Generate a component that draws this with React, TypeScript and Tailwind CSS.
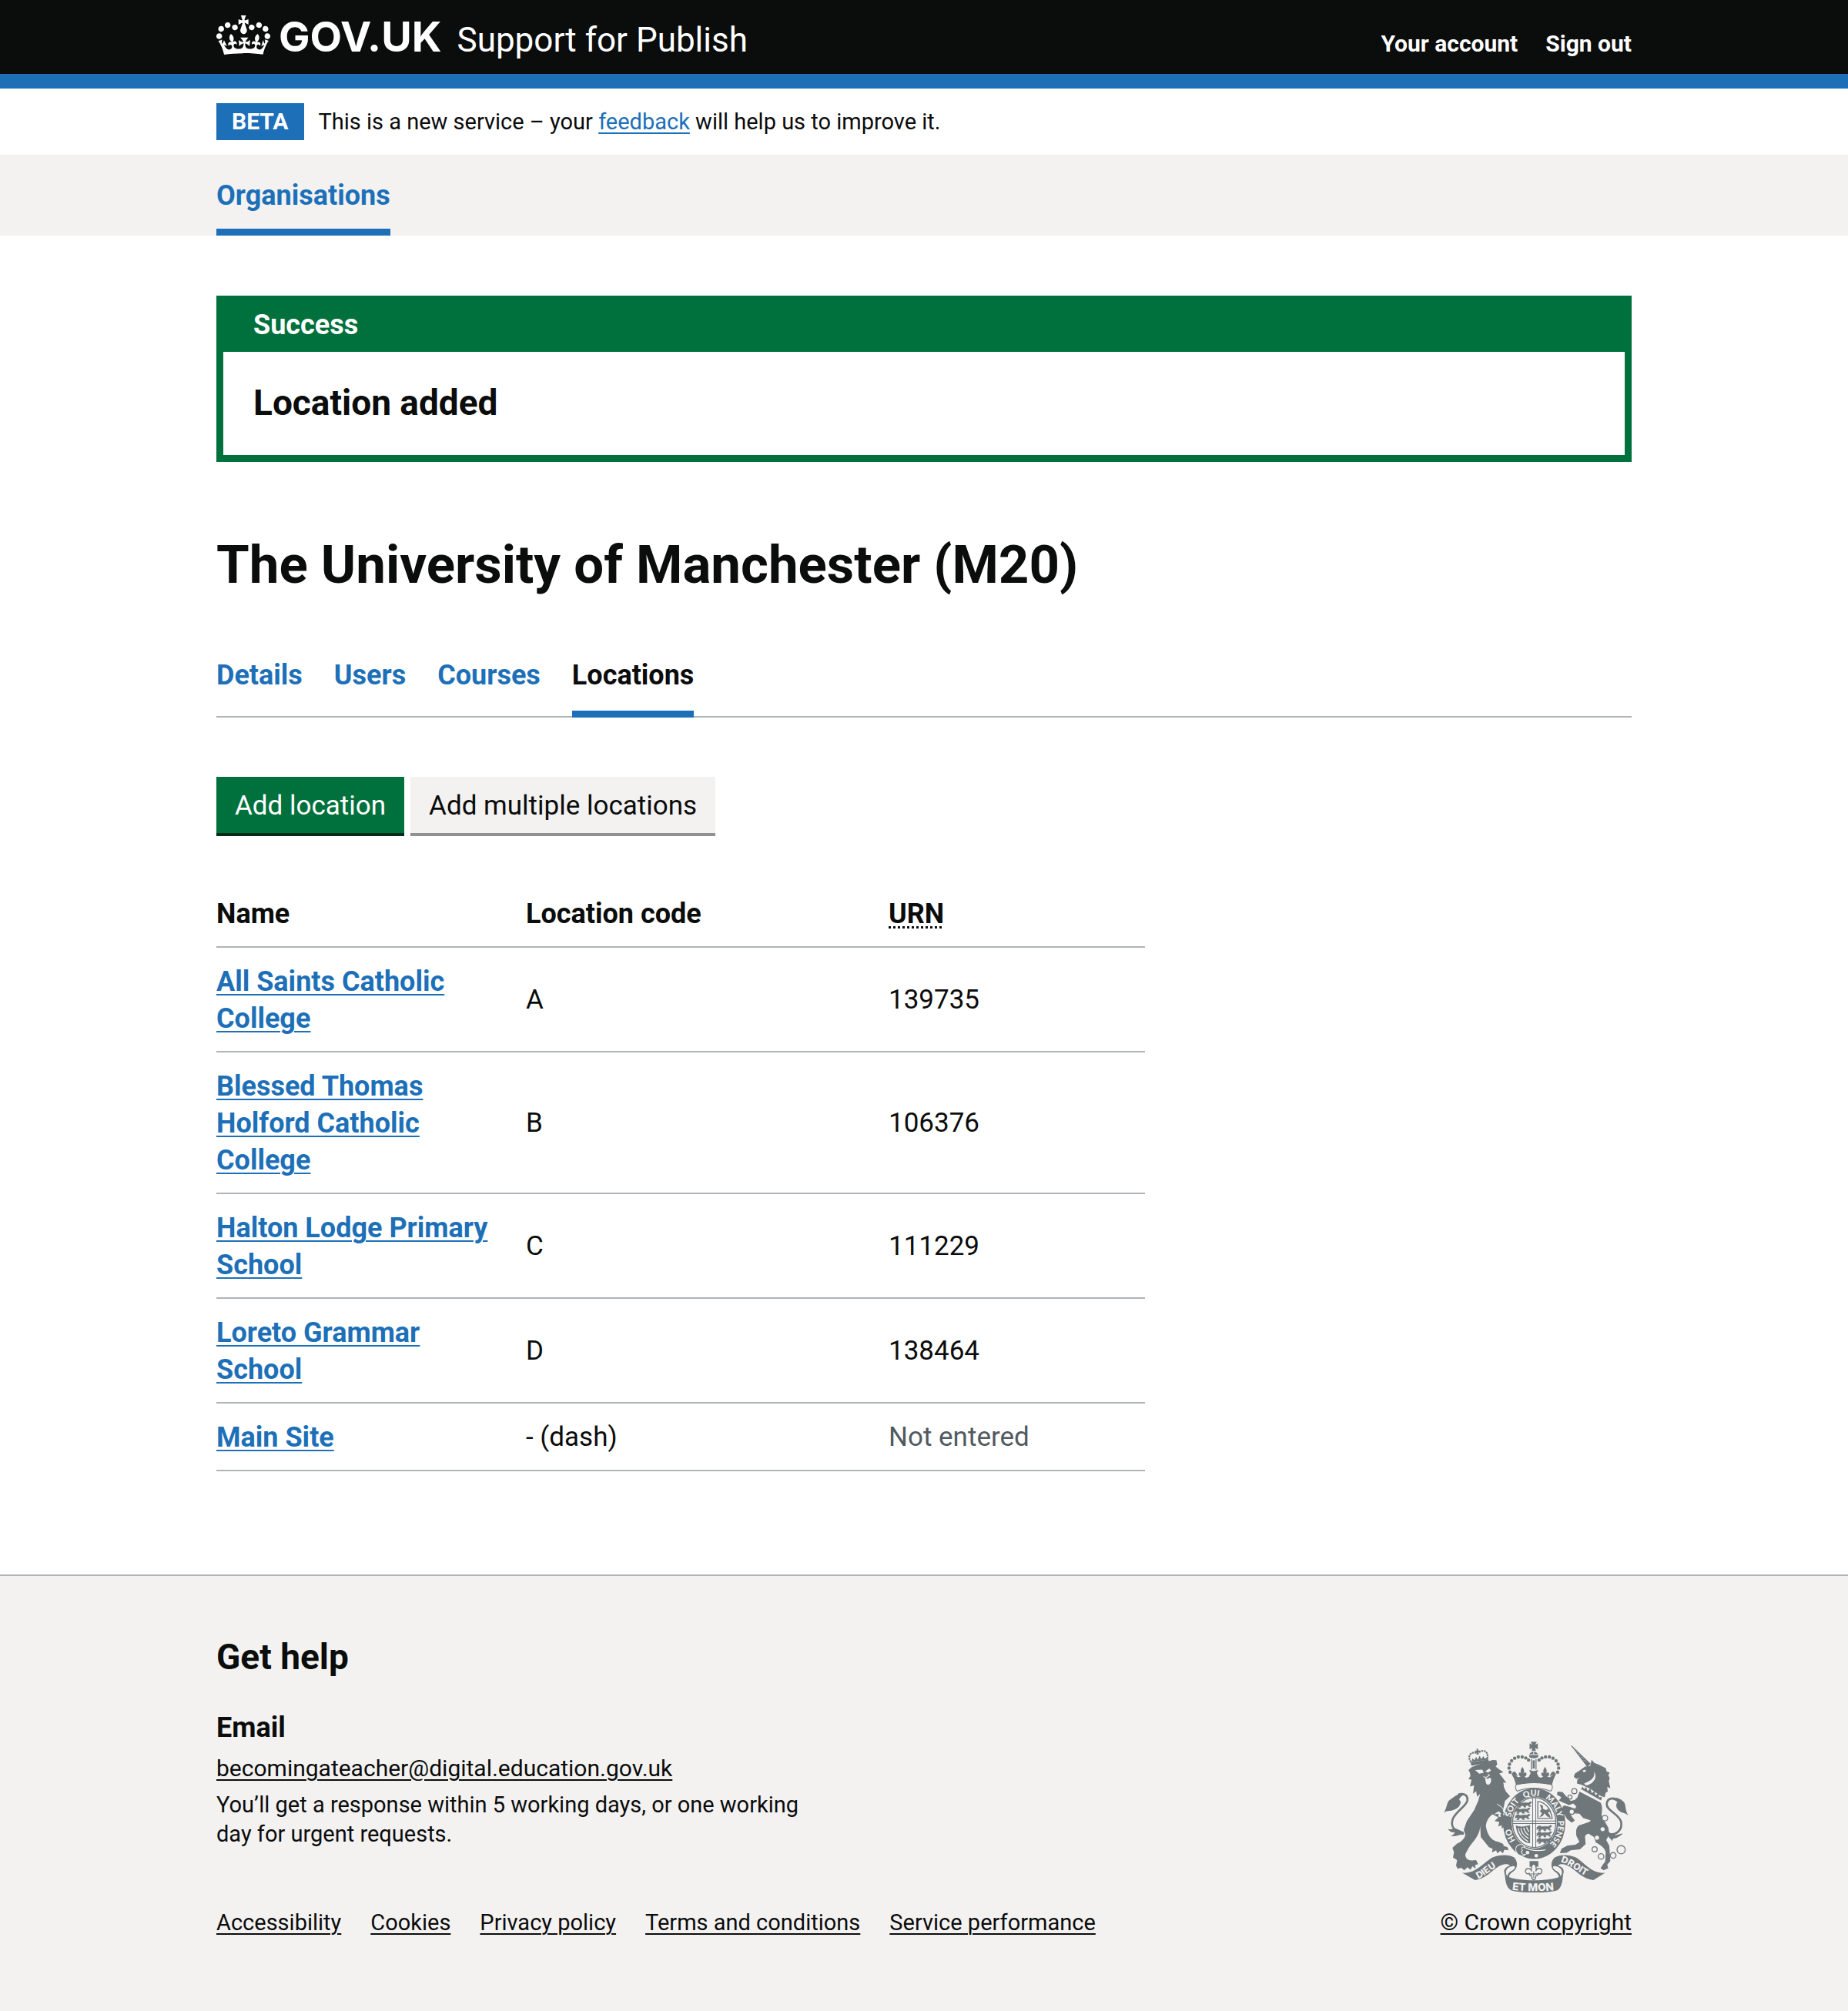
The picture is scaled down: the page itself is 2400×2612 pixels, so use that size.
import React from 'react';

const GREY = '#6f777b';
const PAPER = '#f3f2f1';

function Crown() {
  return (
    <svg className="w-[70px] h-[51px] shrink-0 self-start" viewBox="0 4 35.6 26" fill="currentColor" aria-hidden="true">
      <path
        fillRule="evenodd"
        d="M6.7 12.2c1 .4 2.1-.1 2.5-1s-.1-2.1-1-2.5c-1-.4-2.1.1-2.5 1-.4 1 0 2.1 1 2.5m-4.3 2.5c1 .4 2.1-.1 2.5-1s-.1-2.1-1-2.5c-1-.4-2.1.1-2.5 1-.5 1 0 2.1 1 2.5m-1.3 4.8c1 .4 2.1-.1 2.5-1s-.1-2.1-1-2.5c-1-.4-2.1.1-2.5 1-.4 1 0 2.1 1 2.5m10.4-5.8c1 .4 2.1-.1 2.5-1s-.1-2.1-1-2.5c-1-.4-2.1.1-2.5 1s0 2.1 1 2.5m17.4-1.5c-1 .4-2.1-.1-2.5-1s.1-2.1 1-2.5c1-.4 2.1.1 2.5 1 .5 1 0 2.1-1 2.5m4.3 2.5c-1 .4-2.1-.1-2.5-1s.1-2.1 1-2.5c1-.4 2.1.1 2.5 1 .5 1 0 2.1-1 2.5m1.3 4.8c-1 .4-2.1-.1-2.5-1s.1-2.1 1-2.5c1-.4 2.1.1 2.5 1 .4 1 0 2.1-1 2.5m-10.4-5.8c-1 .4-2.1-.1-2.5-1s.1-2.1 1-2.5c1-.4 2.1.1 2.5 1s0 2.1-1 2.5m-5.3-4.9 2.4 1.3V6.5l-2.4.8c-.1-.1-.1-.2-.2-.3s1-3 1-3h-3.4l1 3c-.1.1-.2.2-.2.3-.1.1-2.4-.7-2.4-.7v3.5l2.4-1.3c.1.1.2.2.3.3l-1.4 4.2c-.1.2-.1.4-.1.6 0 1.1.8 2.2 1.9 2.4h.6c1.1-.2 1.9-1.2 1.9-2.4 0-.2-.1-.4-.1-.6l-1.4-4.2c.1-.2.2-.3.3-.4m-1 20.3c4.6 0 8.9.3 12.8.9 1.1-4.6 2.4-7.2 3.8-9.1l-2.6-.9c.3 1.3.3 1.9 0 2.8-.4-.4-.8-1.2-1.1-2.4l-1.2 4.2c.8-.5 1.4-.9 2-.9-1.2 2.6-2.7 3.2-3.6 3-1.2-.2-1.7-1.3-1.5-2.2.3-1.3 1.6-1.6 2.2-.1 1.2-2.4-.8-3.1-2.1-2.4 1.9-1.9 2.2-3.6.6-5.7-2.2 1.7-2.2 3.3-1.2 5.6-1.3-1.5-3.3-.7-2.5 1.7.9-1.4 2.1-.5 2 .8-.2 1.2-1.7 2.1-3.7 1.9-2.8-.2-2.9-2.2-2.9-3.6.7-.1 1.9.5 2.9 1.9l.4-4.3c-1.1 1.1-2.1 1.4-3.2 1.4.4-1.2 2.1-3 2.1-3h-5.4s1.7 1.9 2.1 3c-1.1 0-2.1-.2-3.2-1.4l.4 4.3c1-1.4 2.2-2 2.9-1.9-.1 1.5-.2 3.4-2.9 3.6-1.9.2-3.5-.7-3.7-1.9-.2-1.3 1-2.2 1.9-.8.7-2.3-1.2-3.2-2.5-1.7 1-2.2 1-3.8-1.2-5.6-1.6 2.1-1.3 3.9.6 5.7-1.3-.7-3.2 0-2.1 2.4.6-1.5 1.9-1.1 2.2.1.2.9-.4 1.9-1.5 2.2-1 .2-2.5-.5-3.7-3 .7 0 1.3.4 2 .9L5 20.4c-.3 1.2-.7 1.9-1.2 2.4-.3-.8-.2-1.5 0-2.8l-2.6.9C2.7 22.8 4 25.4 5.1 30c3.8-.5 8.2-.9 12.7-.9"
      />
    </svg>
  );
}

const pearls: [number, number][] = [
  [330, 188], [326, 172], [328, 157], [336, 144], [348, 134], [362, 129], [377, 129], [391, 133], [402, 141],
];

const chain: [number, number, number][] = [
  [580, 262, 10], [563, 285, 8], [570, 342, 10], [699, 367, 11], [659, 488, 10], [684, 516, 11], [731, 512, 11], [762, 490, 16],
];

const motto: [string, string][] = [
  ['HO', '13.5%'], ['SOIT', '28.5%'], ['QUI', '43.5%'], ['MAL', '57%'], ['Y', '68%'], ['PENSE', '73.5%'],
];

/* One walking lion of the English quarters. */
function Passant({ x, y }: { x: number; y: number }) {
  return (
    <path
      transform={`translate(${x} ${y})`}
      d="M0 8l6-6 8-1 4 4 14-2 14 1 6-5 6 2-3 5-5 2 1 6 5 3-8 1-5-5-10 1 3 6-8 0-2-6-10 1-2 6-8 0 4-7-6-1-4 3 1-6z"
      fill={GREY}
      stroke={GREY}
      strokeWidth="2"
    />
  );
}

function RoyalArms() {
  return (
    <svg className="w-60 h-[196px]" viewBox="73 69 717 587" role="img" aria-label="Royal coat of arms">
      <defs>
        <path id="garter" d="M424 492 A93 106 0 0 1 424 280 A93 106 0 0 1 424 492" />
        <path id="dieu" d="M206 603 C240 590 262 557 312 543" />
        <path id="mon" d="M338 646 Q423 656 510 646" />
        <path id="droit" d="M526 538 C570 548 600 588 660 606" />
      </defs>
      <g fill={GREY}>
        {/* Tails */}
        <path d="M150 424C122 426 98 406 106 374C114 344 160 322 164 298C167 276 146 268 128 276" fill="none" stroke={GREY} strokeWidth="8" />
        <path d="M150 274C122 270 116 284 98 294C82 304 88 318 73 346C88 334 98 342 112 334C126 330 138 318 138 304C136 294 126 298 140 283Z" />
        <path d="M88 408C100 414 106 408 116 406L148 420L150 432C134 428 122 440 100 437C112 432 112 426 116 422C102 424 94 418 88 408Z" />
        <path d="M714 430C744 434 768 412 762 382C756 352 704 338 706 312C708 286 736 286 748 300" fill="none" stroke={GREY} strokeWidth="8" />
        <path d="M712 292C738 280 762 292 774 306C782 318 776 334 790 356C776 344 766 350 752 336C740 326 742 310 748 304C738 296 728 292 712 292Z" />
        <path d="M706 418L740 434L768 426C762 436 752 438 748 442C738 450 730 440 728 456C718 444 708 440 706 418Z" />

        {/* Lion */}
        <path d="M168 180L182 168L214 156L262 141L277 142L280 158L274 166L286 176L304 188L288 193L300 208L316 230L304 228L306 246L314 264L330 282L310 300L302 340L318 360L310 372L300 376L302 392L284 400L288 382L270 378L284 364L262 352C244 366 238 380 236 398C240 424 250 440 262 450C276 460 290 458 304 468L304 474L320 480L324 492L308 490L302 504L292 494L280 504L276 492L260 500L262 486L248 480L216 440L214 396C214 416 204 440 184 462C172 476 162 494 156 508C156 522 164 532 182 532L198 530L206 546L194 550L196 564L184 554L176 568L164 558L152 570L140 560L126 564L120 552L124 530L108 520L112 500L106 482L124 466C144 458 152 446 156 434L150 412L162 378L190 336L206 300L214 272L202 284L198 262L186 272L190 240L174 244L180 218L168 214L176 204L174 190Z" />
        <path d="M194 180L222 178L228 190L210 194ZM234 184L250 174L256 182L244 190ZM268 352L286 350L284 362L298 362L296 350L286 340Z" fill={PAPER} />
        <path d="M232 210C240 200 250 204 256 214C258 226 252 238 243 237C235 236 236 224 232 210Z" fill={PAPER} />
        <path d="M226 206L236 198L248 200L254 208L243 214Z" />
        <path d="M244 196L250 200L238 208L226 206" fill="none" stroke={PAPER} strokeWidth="3" />

        {/* Lion's crown */}
        <path d="M176 150L246 139L248 149L180 163Z" />
        <path d="M180 148L184 134L192 142L198 128L204 140L212 124L218 138L226 126L232 136L242 130L244 140Z" />
        <path d="M176 146C162 122 182 104 204 116C222 96 248 104 242 136" fill="none" stroke={GREY} strokeWidth="7" strokeDasharray="1 9" strokeLinecap="round" />
        <path d="M200 96L206 98L206 104L214 104L214 110L206 111L207 120L200 120L200 112L193 110L193 104L200 105Z" />

        {/* Unicorn */}
        <path d="M566 84L572 86L644 156L630 168Z" />
        <path d="M574 96l12 4M584 106l12 5M594 117l12 5M604 128l14 6M614 141l14 5" fill="none" stroke={PAPER} strokeWidth="1" />
        <path d="M622 166L642 164L647 140L658 152L678 160L690 166L702 172L706 186L718 190L712 200L718 212L714 222L720 250L708 246L710 264L702 268L698 286L682 280L640 252L604 236L590 232L592 216L602 208L588 214L578 206L582 194L600 182Z" />
        <path d="M612 182L622 178L626 186L616 188ZM656 184C664 212 640 222 618 232L624 240C650 236 674 212 656 184Z" fill={PAPER} />
        <path d="M604 240L610 238L692 290L688 304L598 262Z" fill={PAPER} />
        <path d="M606 254L612 244L618 254L626 246L632 262L642 250L648 270L658 262L662 278L674 270L676 286L688 284L684 298Z" />
        <path d="M600 264L682 306C690 320 688 336 686 352C688 370 704 386 712 404L716 430L704 452L716 474L720 534L708 548L712 562L694 570L682 562L692 546L700 536L702 500C700 484 680 470 664 462L656 440L636 428C624 430 620 436 622 444L624 468L602 488L566 492L550 502L524 503L530 486L552 474L584 470L600 460L588 436C584 410 592 396 602 394L638 382L644 376L614 366L600 350L578 348L560 344L572 364L582 376L570 384L552 370L540 348L526 330L540 318L566 324L582 330L588 322L576 310L560 316L540 306L522 298L530 286L512 276L516 264L534 266L548 282L566 300L582 296L592 286Z" />
        <g fill={PAPER} stroke={GREY} strokeWidth="4">
          {chain.map(([x, y, r]) => (
            <circle key={`${x}-${y}`} cx={x} cy={y} r={r} />
          ))}
        </g>
        <circle cx="690" cy="410" r="8" fill={PAPER} />
        <circle cx="668" cy="443" r="8" fill={PAPER} />

        {/* Garter */}
        <ellipse cx="424" cy="388" rx="125" ry="142" fill={PAPER} />
        <ellipse cx="424" cy="388" rx="121" ry="138" />
        <ellipse cx="424" cy="384" rx="88" ry="101" fill={PAPER} />
        <ellipse cx="424" cy="384" rx="84" ry="97" fill={PAPER} stroke={GREY} strokeWidth="4" />

        {/* Shield */}
        <path d="M418 290V480M430 290V480M342 378H506M342 388H506" fill="none" stroke={GREY} strokeWidth="3" />
        <Passant x={356} y={304} />
        <Passant x={350} y={328} />
        <Passant x={350} y={352} />
        <Passant x={434} y={396} />
        <Passant x={434} y={420} />
        <Passant x={434} y={444} />
        <path d="M438 302C464 304 488 326 494 368H438Z" fill="none" stroke={GREY} strokeWidth="4" />
        <path d="M446 314L458 318L458 330L470 336L478 330L486 344L476 344L484 354L488 366L474 360L464 348L458 358L444 364L454 348L446 340L452 332Z" />
        <path d="M352 394C364 402 380 400 392 398L408 394V464C384 466 356 436 352 394Z" />
        <path d="M362 406C364 426 376 444 400 458M372 406C374 422 384 436 402 446M383 404C386 418 392 426 402 434M394 402L403 420" fill="none" stroke={PAPER} strokeWidth="4" />

        <g fill={PAPER} fontFamily="Lato, sans-serif" fontWeight="900" fontSize="32">
          {motto.map(([word, at]) => (
            <text key={word}>
              <textPath href="#garter" startOffset={at}>{word}</textPath>
            </text>
          ))}
        </g>

        {/* Buckle and strap end */}
        <path d="M384 480C410 494 440 496 468 490" fill="none" stroke={PAPER} strokeWidth="4" />
        <path d="M352 486C356 466 382 464 388 480C374 476 372 486 378 492C370 498 376 510 390 508C380 520 352 512 352 486Z" stroke={PAPER} strokeWidth="3" />
        <circle cx="398" cy="501" r="7" fill={PAPER} />
        <circle cx="432" cy="513" r="7" fill={PAPER} />

        {/* Lion's paw and unicorn's hoof over the garter */}
        <path d="M292 350L318 360L338 378L328 384L340 402L326 400L320 412L308 400L298 408L296 380Z" />
        <path d="M280 312C300 324 312 340 320 360" fill="none" stroke={PAPER} strokeWidth="3" />
        <path d="M512 266L534 266L548 284L566 300L560 316L536 306L520 298L530 286ZM526 330L544 318L566 326L556 340L580 376L570 384L552 370Z" />

        {/* Crown */}
        <path d="M410 70H434L428 82L438 76V100L428 94L430 106H414L416 94L406 100V76L416 82Z" />
        <path d="M404 124C406 104 438 104 440 124C442 138 402 138 404 124Z" />
        <path d="M404 120H440M422 106V120" stroke={PAPER} strokeWidth="3" />
        {pearls.map(([x, y]) => (
          <g key={`${x}-${y}`}>
            <circle cx={x} cy={y} r="6.5" />
            <circle cx={845 - x} cy={y} r="6.5" />
          </g>
        ))}
        <path d="M413 138V178M431 138V178" stroke={GREY} strokeWidth="4" />
        <path d="M418 142H426V174H418Z" />
        <path d="M334 192L350 200L362 208L378 202L394 210L410 204L422 198L434 204L450 210L466 202L484 208L496 200L510 192L500 214L492 240C450 230 396 230 354 240L346 214Z" />
        <path d="M378 168C386 178 386 188 382 194C390 184 398 192 392 202L380 210L366 202C360 192 368 184 374 194C370 186 370 178 378 168ZM466 168C474 178 474 188 470 194C478 184 486 192 480 202L466 210L454 202C448 192 456 184 462 194C458 186 458 178 466 168Z" />
        <path d="M404 180L422 184L440 180L434 192L442 208H402L410 192Z" />
        <path d="M338 196C340 182 350 184 354 192L360 204ZM506 196C504 182 494 184 490 192L484 204Z" />
        <path d="M354 236C396 226 450 226 492 236C496 244 496 254 488 262C450 246 396 246 358 262C350 254 350 244 354 236Z" fill={PAPER} stroke={GREY} strokeWidth="3" />
        <path d="M354 222C396 212 450 212 494 222L492 238C450 228 396 228 354 238Z" />

        {/* Fleur-de-lis */}
        <path d="M406 534H440V556H406Z" />
        <path d="M422 542C432 552 434 562 430 574C434 560 452 560 454 572C455 582 446 586 440 582C440 592 432 590 430 592C430 600 426 606 422 608C418 606 414 600 414 592C412 590 404 592 404 582C398 586 389 582 390 572C392 560 410 560 414 574C410 562 412 552 422 542Z" fill={PAPER} stroke={GREY} strokeWidth="4" />
        <path d="M404 584H440M422 574V600" stroke={GREY} strokeWidth="3" />

        {/* Ribbon */}
        <path d="M144 580C198 584 226 540 262 520C290 508 326 508 346 520C360 534 362 560 344 574C328 584 324 592 328 606L312 592C302 570 308 558 330 552C320 542 300 546 284 556C256 574 234 604 194 608Z" />
        <path d="M332 556C352 548 354 560 340 570C324 578 320 586 320 594C310 582 312 562 332 556Z" fill={PAPER} />
        <path d="M700 580C646 584 620 540 586 520C556 508 526 508 504 520C488 534 486 560 502 574C518 584 522 592 518 606L534 592C544 570 538 558 516 552C526 542 546 546 562 556C590 574 612 604 654 608Z" />
        <path d="M514 556C494 548 492 560 506 570C522 578 526 586 526 594C536 582 534 562 514 556Z" fill={PAPER} />
        <path d="M310 588C340 616 506 616 536 588C534 610 532 636 514 648C470 660 376 660 334 648C314 636 312 610 310 588Z" />
        <g fill={PAPER} fontFamily="Inter, sans-serif" fontWeight="800">
          <text fontSize="36"><textPath href="#dieu">DIEU</textPath></text>
          <text fontSize="41"><textPath href="#mon">ET MON</textPath></text>
          <text fontSize="36"><textPath href="#droit">DROIT</textPath></text>
        </g>
      </g>
    </svg>
  );
}

const tabs = ['Details', 'Users', 'Courses'];

const locations = [
  { name: 'All Saints Catholic College', code: 'A', urn: '139735' },
  { name: 'Blessed Thomas Holford Catholic College', code: 'B', urn: '106376' },
  { name: 'Halton Lodge Primary School', code: 'C', urn: '111229' },
  { name: 'Loreto Grammar School', code: 'D', urn: '138464' },
  { name: 'Main Site', code: '- (dash)', urn: null },
];

const footerLinks = ['Accessibility', 'Cookies', 'Privacy policy', 'Terms and conditions', 'Service performance'];

export default function App() {
  return (
    <div className="bg-white font-['Roboto',sans-serif] text-[#0b0c0c]">
      <header className="border-b-[19px] border-[#1d70b8] bg-[#0b0c0c] text-white">
        <div className="mx-auto flex w-full max-w-[1838px] items-baseline py-5">
          <a href="#" className="flex items-baseline gap-[11px]">
            <Crown />
            <span className="font-['Inter',sans-serif] text-[54px] leading-[56px] font-bold">GOV.UK</span>
          </a>
          <a href="#" className="ml-5 text-[44px] leading-[48px]">Support for Publish</a>
          <nav aria-label="Account" className="ml-auto flex gap-9 text-[30px] leading-[38px] font-bold">
            <a href="#">Your account</a>
            <a href="#">Sign out</a>
          </nav>
        </div>
      </header>

      <div className="mx-auto flex w-full max-w-[1838px] items-center gap-[19px] py-[19px] leading-[48px]">
        <strong className="bg-[#1d70b8] px-5 text-[30px] font-bold text-white">BETA</strong>
        <span className="text-[29px]">
          This is a new service – your{' '}
          <a href="#" className="text-[#1d70b8] underline decoration-2 underline-offset-4">feedback</a> will help us to
          improve it.
        </span>
      </div>

      <nav aria-label="Primary" className="bg-[#f3f2f1]">
        <div className="mx-auto flex w-full max-w-[1838px]">
          <a href="#" className="border-b-[9px] border-[#1d70b8] pt-[29px] pb-[19px] text-[36px] leading-[48px] font-bold text-[#1d70b8]">
            Organisations
          </a>
        </div>
      </nav>

      <main className="mx-auto w-full max-w-[1838px] pt-[78px] pb-[134px]">
        <section aria-labelledby="banner-title" className="border-[9px] border-[#00703c] bg-[#00703c]">
          <h2 id="banner-title" className="px-[39px] pt-[5px] pb-[11px] text-[36px] leading-[48px] font-bold text-white">
            Success
          </h2>
          <p className="bg-white px-[39px] pt-[37px] pb-[39px] text-[46px] leading-[58px] font-bold">Location added</p>
        </section>

        <h1 className="mt-[94px] text-[69px] leading-[80px] font-bold">The University of Manchester (M20)</h1>

        <nav aria-label="Organisation" className="mt-[79px] flex gap-[41px] border-b-2 border-[#b1b4b6] text-[36px] leading-[48px] font-bold">
          {tabs.map((tab) => (
            <a key={tab} href="#" className="pb-[31px] -mb-0.5 text-[#1d70b8]">{tab}</a>
          ))}
          <a href="#" aria-current="page" className="-mb-0.5 border-b-[9px] border-[#1d70b8] pb-[22px]">Locations</a>
        </nav>

        <div className="mt-[77px] flex gap-2 text-[35px] leading-[48px]">
          <button type="button" className="border-b-4 border-[#002d18] bg-[#00703c] px-6 pt-[14px] pb-[11px] text-white">
            Add location
          </button>
          <button type="button" className="border-b-4 border-[#929191] bg-[#f3f2f1] px-6 pt-[14px] pb-[11px]">
            Add multiple locations
          </button>
        </div>

        <table className="mt-[57px] w-[1206px] table-fixed border-separate border-spacing-0 text-left text-[35px] leading-[48px]">
          <thead className="text-[36px]">
            <tr>
              <th scope="col" className="w-[402px] border-b-2 border-[#b1b4b6] pt-5 pb-[18px] pr-9 font-bold">Name</th>
              <th scope="col" className="w-[471px] border-b-2 border-[#b1b4b6] pt-5 pb-[18px] pr-9 font-bold">Location code</th>
              <th scope="col" className="border-b-2 border-[#b1b4b6] pt-5 pb-[18px] font-bold">
                <abbr title="Unique reference number" className="underline decoration-dotted decoration-[3px] underline-offset-4 [text-decoration-skip-ink:none]">URN</abbr>
              </th>
            </tr>
          </thead>
          <tbody>
            {locations.map(({ name, code, urn }) => (
              <tr key={name}>
                <th scope="row" className="border-b-2 border-[#b1b4b6] pt-5 pb-[18px] pr-9 text-[36px] font-bold">
                  <a href="#" className="text-[#1d70b8] underline decoration-2 underline-offset-4">{name}</a>
                </th>
                <td className="border-b-2 border-[#b1b4b6] pt-5 pb-[18px] pr-9">{code}</td>
                <td className="border-b-2 border-[#b1b4b6] pt-5 pb-[18px]">
                  {urn ?? <span className="text-[#505a5f]">Not entered</span>}
                </td>
              </tr>
            ))}
          </tbody>
        </table>
      </main>

      <footer className="border-t-2 border-[#b1b4b6] bg-[#f3f2f1]">
        <div className="mx-auto flex w-full max-w-[1838px] items-end justify-between pt-[76px] pb-24 text-[29px] leading-[38px]">
          <div>
            <h2 className="text-[46px] leading-[58px] font-bold">Get help</h2>
            <h3 className="mt-[39px] text-[36px] leading-[48px] font-bold">Email</h3>
            <a href="#" className="mt-2.5 block text-[30px] underline decoration-2 underline-offset-4">
              becomingateacher@digital.education.gov.uk
            </a>
            <p className="mt-[9px] max-w-[790px]">
              You’ll get a response within 5 working days, or one working day for urgent requests.
            </p>
            <ul className="mt-[77px] flex gap-[38px]">
              {footerLinks.map((link) => (
                <li key={link}>
                  <a href="#" className="underline decoration-2 underline-offset-4">{link}</a>
                </li>
              ))}
            </ul>
          </div>
          <a href="#" className="flex flex-col items-center gap-5 text-[30px] underline decoration-2 underline-offset-4">
            <RoyalArms />
            <span>© Crown copyright</span>
          </a>
        </div>
      </footer>
    </div>
  );
}
